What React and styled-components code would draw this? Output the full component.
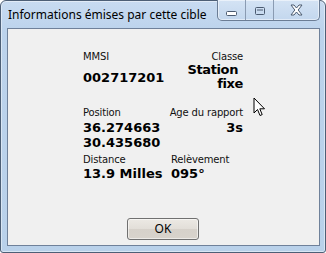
import styled, { createGlobalStyle } from 'styled-components';

const GlobalStyle = createGlobalStyle`
    html, body {
        margin: 0;
        padding: 0;
        background: #ffffff;
    }
    * {
        box-sizing: border-box;
    }
`;

const Window = styled.div`
    position: relative;
    width: 326px;
    height: 253px;
    display: flex;
    flex-direction: column;
    padding: 0 5px 6px 6px;
    border: 1px solid #4d5f76;
    border-radius: 6px 6px 3px 3px;
    background: linear-gradient(to bottom, #c8dbf1 0px, #bcd3ec 30px, #b9d1ea 100%);
    box-shadow: inset 0 0 0 1px rgba(255, 255, 255, 0.45);
`;

const TitleBar = styled.div`
    height: 27px;
    display: flex;
    justify-content: space-between;
    align-items: flex-start;
`;

const Title = styled.div`
    margin: 6px 0 0 1px;
    font-family: 'Noto Sans', 'Open Sans', sans-serif;
    font-size: 12px;
    line-height: 16px;
    color: #000000;
`;

const CaptionGroup = styled.div`
    display: flex;
    height: 21px;
    margin: -1px 0 0 0;
    border: 1px solid #6b7d95;
    border-top: none;
    border-radius: 0 0 5px 5px;
    overflow: hidden;
    background: linear-gradient(to bottom, #d4e3f4, #c3d7ee);
    box-shadow: inset 0 0 0 1px rgba(255, 255, 255, 0.5);
`;

const CaptionButton = styled.div`
    width: ${({ $w }) => $w}px;
    height: 100%;
    display: flex;
    align-items: center;
    justify-content: center;
    border-left: ${({ $first }) => ($first ? 'none' : '1px solid #8a9bb2')};
`;

const Client = styled.div`
    flex: 1;
    display: flex;
    flex-direction: column;
    border: 1px solid #6f819a;
    background: #f0f0f0;
    padding: 22px 0 0 75px;
`;

const Row = styled.div`
    width: 160px;
    margin-top: ${({ $gap }) => $gap}px;
`;

const LabelLine = styled.div`
    display: flex;
    justify-content: space-between;
    white-space: nowrap;
    font-family: 'DejaVu Sans', Verdana, sans-serif;
    font-size: 10px;
    line-height: 12px;
    letter-spacing: -0.15px;
    color: #111111;
`;

const RightLabel = styled.span`
    width: ${({ $align }) => ($align === 'left' ? '72px' : 'auto')};
    text-align: ${({ $align }) => $align};
`;

const ValueLine = styled.div`
    display: flex;
    justify-content: space-between;
    align-items: ${({ $center }) => ($center ? 'center' : 'flex-start')};
    margin-top: ${({ $gap }) => $gap}px;
    white-space: nowrap;
    font-family: 'DejaVu Sans', Verdana, sans-serif;
    font-weight: bold;
    font-size: 13px;
    line-height: 15px;
    color: #000000;
`;

const RightValue = styled.div`
    width: ${({ $align }) => ($align === 'left' ? '72px' : 'auto')};
    text-align: ${({ $align }) => $align};
    line-height: ${({ $lh }) => $lh || 15}px;
    letter-spacing: ${({ $tight }) => ($tight ? '-0.4px' : '0')};
`;

const Indent = styled.span`
    padding-right: 5px;
`;

const Footer = styled.div`
    margin: auto 0 5px -75px;
    display: flex;
    justify-content: center;
`;

const OkButton = styled.button`
    width: 72px;
    height: 22px;
    margin-right: 1px;
    border: 1px solid #707070;
    border-radius: 3px;
    background: linear-gradient(to bottom, #ece9e4 0%, #e2ded8 50%, #d6d1ca 51%, #d8d3cc 100%);
    box-shadow: inset 0 0 0 1px rgba(255, 255, 255, 0.55);
    font-family: 'Noto Sans', 'Open Sans', sans-serif;
    font-size: 12px;
    line-height: 16px;
    color: #000000;
    padding: 0;
`;

const Cursor = styled.svg`
    position: absolute;
    left: 252px;
    top: 96px;
`;

const MinGlyph = () => (
    <svg width="11" height="5" viewBox="0 0 11 5" style={{ marginTop: 7 }}>
        <rect x="0.5" y="0.5" width="10" height="4" rx="1" fill="#ffffff" stroke="#4a5a70" />
    </svg>
);

const MaxGlyph = () => (
    <svg width="10" height="8" viewBox="0 0 10 8" style={{ marginTop: 1 }}>
        <rect x="0.5" y="0.5" width="9" height="7" rx="1" fill="none" stroke="#4a5a70" />
        <rect x="2" y="2" width="6" height="2" fill="#4a5a70" opacity="0.5" />
    </svg>
);

const CloseGlyph = () => (
    <svg width="13" height="12" viewBox="0 0 13 12">
        <path
            d="M1 1 L4 1 L6.5 4 L9 1 L12 1 L8.2 6 L12 11 L9 11 L6.5 8 L4 11 L1 11 L4.8 6 Z"
            fill="#ffffff"
            stroke="#4a5a70"
            strokeWidth="1"
            strokeLinejoin="round"
        />
    </svg>
);

const App = () => {
    return (
        <>
            <GlobalStyle />
            <Window>
                <TitleBar>
                    <Title>Informations émises par cette cible</Title>
                    <CaptionGroup>
                        <CaptionButton $w={27} $first>
                            <MinGlyph />
                        </CaptionButton>
                        <CaptionButton $w={28}>
                            <MaxGlyph />
                        </CaptionButton>
                        <CaptionButton $w={46}>
                            <CloseGlyph />
                        </CaptionButton>
                    </CaptionGroup>
                </TitleBar>

                <Client>
                    <Row $gap={0}>
                        <LabelLine>
                            <span>MMSI</span>
                            <RightLabel $align="right">Classe</RightLabel>
                        </LabelLine>
                        <ValueLine $gap={0} $center>
                            <div>002717201</div>
                            <RightValue $align="right" $lh={14} $tight>
                                <Indent>Station</Indent>
                                <br />
                                fixe
                            </RightValue>
                        </ValueLine>
                    </Row>

                    <Row $gap={16}>
                        <LabelLine>
                            <span>Position</span>
                            <RightLabel $align="right">Age du rapport</RightLabel>
                        </LabelLine>
                        <ValueLine $gap={1}>
                            <div>
                                36.274663
                                <br />
                                30.435680
                            </div>
                            <RightValue $align="right">3s</RightValue>
                        </ValueLine>
                    </Row>

                    <Row $gap={4}>
                        <LabelLine>
                            <span>Distance</span>
                            <RightLabel $align="left">Relèvement</RightLabel>
                        </LabelLine>
                        <ValueLine $gap={0}>
                            <div>13.9 Milles</div>
                            <RightValue $align="left">095°</RightValue>
                        </ValueLine>
                    </Row>

                    <Footer>
                        <OkButton>OK</OkButton>
                    </Footer>
                </Client>

                <Cursor width="13" height="20" viewBox="0 0 13 20">
                    <path
                        d="M1 1 L1 16 L4.5 12.5 L7 18.5 L9.2 17.6 L6.8 11.8 L11.5 11.8 Z"
                        fill="#ffffff"
                        stroke="#000000"
                        strokeWidth="1"
                        strokeLinejoin="miter"
                    />
                </Cursor>
            </Window>
        </>
    );
};

export default App;
